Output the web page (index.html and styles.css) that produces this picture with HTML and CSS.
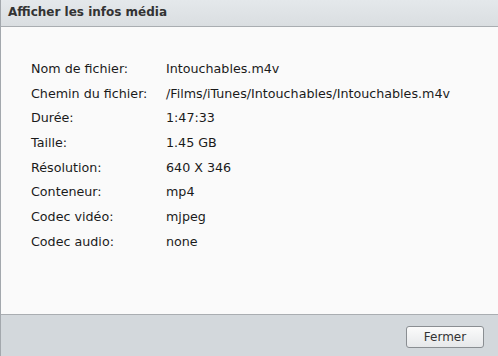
FILE: index.html
```html
<!DOCTYPE html>
<html lang="fr">
<head>
<meta charset="utf-8">
<link rel="stylesheet" href="styles.css">
</head>
<body>
<div class="dialog">
  <div class="header">Afficher les infos média</div>
  <div class="content">
    <div class="grid">
      <div class="label">Nom de fichier:</div><div class="value">Intouchables.m4v</div>
      <div class="label">Chemin du fichier:</div><div class="value">/Films/iTunes/Intouchables/Intouchables.m4v</div>
      <div class="label">Durée:</div><div class="value">1:47:33</div>
      <div class="label">Taille:</div><div class="value">1.45 GB</div>
      <div class="label">Résolution:</div><div class="value">640 X 346</div>
      <div class="label">Conteneur:</div><div class="value">mp4</div>
      <div class="label">Codec vidéo:</div><div class="value">mjpeg</div>
      <div class="label">Codec audio:</div><div class="value">none</div>
    </div>
  </div>
  <div class="footer">
    <button class="btn">Fermer</button>
  </div>
</div>
</body>
</html>
```
FILE: styles.css
```css
html, body {
  margin: 0;
  padding: 0;
  width: 498px;
  height: 356px;
  overflow: hidden;
}
body {
  font-family: "DejaVu Sans", Verdana, sans-serif;
  font-size: 12.7px;
  color: #1a1a1a;
}
.dialog {
  display: flex;
  flex-direction: column;
  height: 356px;
  border-left: 1px solid #a3a8ad;
  box-sizing: border-box;
}
.header {
  height: 27px;
  box-sizing: border-box;
  border-bottom: 1px solid #a9adb1;
  background: linear-gradient(#e4e8eb, #dadee1);
  padding: 5px 0 0 7px;
  font-weight: bold;
  font-size: 12px;
  color: #333;
}
.content {
  flex: 1;
  background: #fafafa;
  padding: 34px 0 0 30px;
}
.grid {
  display: grid;
  grid-template-columns: 135px auto;
  grid-auto-rows: 24.7px;
}
.footer {
  height: 42px;
  box-sizing: border-box;
  border-top: 1px solid #a9adb1;
  background: #d3d8dc;
  display: flex;
  justify-content: flex-end;
  align-items: flex-start;
  padding: 11px 14px 0 0;
}
.btn {
  width: 78px;
  height: 22px;
  border: 1px solid #8a8e92;
  border-radius: 3px;
  background: linear-gradient(#fbfbfb, #e6e8ea);
  font-family: "DejaVu Sans", Verdana, sans-serif;
  font-size: 12px;
  color: #333;
  padding: 0;
}
```
